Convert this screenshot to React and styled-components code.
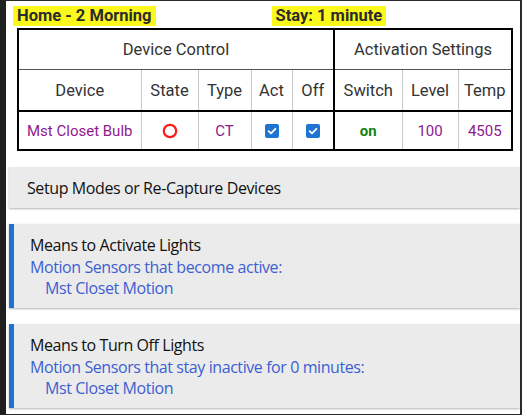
import React from 'react';
import styled, { createGlobalStyle } from 'styled-components';

const GlobalStyle = createGlobalStyle`
	html, body {
		margin: 0;
		padding: 0;
		background: #fff;
	}
	body {
		width: 522px;
		height: 417px;
		overflow: hidden;
	}
`;

const PURPLE = '#8e1a8e';
const BLUE_TEXT = '#3d5fd2';
const PANEL_BG = '#ebebeb';

const Frame = styled.div`
	box-sizing: border-box;
	width: 522px;
	height: 415px;
	border-left: 6px solid #1f1f1f;
	border-top: 1px solid #2a2a2a;
	border-right: 2px solid #2a2a2a;
	border-bottom: 1px solid #2a2a2a;
	padding-top: 4px;
	overflow: hidden;
`;

const TitleBar = styled.div`
	display: flex;
	padding-left: 7px;
	font-family: Roboto, "Liberation Sans", sans-serif;
	font-weight: bold;
	font-size: 16.5px;
	color: #2b2b2b;
	height: 21px;
	align-items: center;
`;

const Mark = styled.span`
	background: #fbf81c;
	padding: 0 4px;
	line-height: 20px;
	&:first-child {
		margin-right: 116px;
	}
`;

const Table = styled.table`
	margin: 2px 0 0 11px;
	width: 494px;
	border-collapse: collapse;
	border: 2px solid #000;
	font-family: Roboto, "Liberation Sans", sans-serif;
	font-size: 16.5px;
	color: #333;
	table-layout: fixed;
`;

const GroupCell = styled.th`
	font-weight: normal;
	height: 39px;
	border-bottom: 1px solid #555;
	border-right: ${p => (p.$split ? '2px solid #000' : 'none')};
	text-align: center;
	padding: 0;
`;

const HeadCell = styled.th`
	font-weight: normal;
	height: 40px;
	border-left: 1px solid #c8c8c8;
	border-right: ${p => (p.$split ? '2px solid #000' : '1px solid #c8c8c8')};
	border-bottom: 2px solid #000;
	text-align: center;
	padding: 0;
`;

const Cell = styled.td`
	height: 37px;
	text-align: center;
	padding: 0;
	border-left: 1px solid #c8c8c8;
	border-right: ${p => (p.$split ? '2px solid #000' : '1px solid #c8c8c8')};
	color: ${p => p.$color || PURPLE};
	font-weight: ${p => (p.$bold ? 'bold' : 'normal')};
	font-size: 15px;
	vertical-align: middle;
`;

const Icon = styled.svg`
	display: block;
	margin: 0 auto;
`;

const StateOff = () => (
	<Icon width="16" height="16" viewBox="0 0 16 16">
		<circle cx="8" cy="8" r="6.2" fill="none" stroke="#ff1a1a" strokeWidth="2.2" />
	</Icon>
);

const Checked = () => (
	<Icon width="14" height="14" viewBox="0 0 14 14">
		<rect x="0" y="0" width="14" height="14" rx="2" fill="#1e74d0" />
		<path d="M3.6 7.2 L6 9.4 L10.4 4.8" fill="none" stroke="#fff" strokeWidth="1.8" strokeLinecap="round" strokeLinejoin="round" />
	</Icon>
);

const SetupBar = styled.div`
	margin: 16px 0 0 3px;
	height: 41px;
	background: ${PANEL_BG};
	box-shadow: 0 1px 2px rgba(0, 0, 0, 0.3);
	display: flex;
	align-items: center;
	padding-left: 18px;
	font-family: "Open Sans", "Noto Sans", sans-serif;
	font-size: 16px;
	color: #111;
	letter-spacing: -0.4px;
`;

const Panel = styled.section`
	margin: 16px 0 0 3px;
	height: 84px;
	box-sizing: border-box;
	background: ${PANEL_BG};
	border-left: 5px solid #1e73cf;
	box-shadow: 0 1px 2px rgba(0, 0, 0, 0.3);
	padding: 11px 0 0 16px;
	font-family: "Open Sans", "Noto Sans", sans-serif;
	font-size: 16px;
	line-height: 21.5px;
	letter-spacing: -0.42px;
`;

const PanelTitle = styled.div`
	color: #111;
`;

const PanelLine = styled.div`
	color: ${BLUE_TEXT};
	padding-left: ${p => (p.$indent ? '15px' : '0')};
`;

const cols = [123, 57, 53, 41, 42, 68, 56, 54];

export default function App() {
	return (
		<>
			<GlobalStyle />
			<Frame>
				<TitleBar>
					<Mark>Home - 2 Morning</Mark>
					<Mark>Stay: 1 minute</Mark>
				</TitleBar>
				<Table>
					<colgroup>
						{cols.map((w, i) => (
							<col key={i} style={{ width: w }} />
						))}
					</colgroup>
					<thead>
						<tr>
							<GroupCell colSpan={5} $split>Device Control</GroupCell>
							<GroupCell colSpan={3}>Activation Settings</GroupCell>
						</tr>
						<tr>
							<HeadCell>Device</HeadCell>
							<HeadCell>State</HeadCell>
							<HeadCell>Type</HeadCell>
							<HeadCell>Act</HeadCell>
							<HeadCell $split>Off</HeadCell>
							<HeadCell>Switch</HeadCell>
							<HeadCell>Level</HeadCell>
							<HeadCell>Temp</HeadCell>
						</tr>
					</thead>
					<tbody>
						<tr>
							<Cell>Mst Closet Bulb</Cell>
							<Cell><StateOff /></Cell>
							<Cell>CT</Cell>
							<Cell><Checked /></Cell>
							<Cell $split><Checked /></Cell>
							<Cell $color="#128412" $bold>on</Cell>
							<Cell>100</Cell>
							<Cell>4505</Cell>
						</tr>
					</tbody>
				</Table>
				<SetupBar>Setup Modes or Re-Capture Devices</SetupBar>
				<Panel>
					<PanelTitle>Means to Activate Lights</PanelTitle>
					<PanelLine>Motion Sensors that become active:</PanelLine>
					<PanelLine $indent>Mst Closet Motion</PanelLine>
				</Panel>
				<Panel>
					<PanelTitle>Means to Turn Off Lights</PanelTitle>
					<PanelLine>Motion Sensors that stay inactive for 0 minutes:</PanelLine>
					<PanelLine $indent>Mst Closet Motion</PanelLine>
				</Panel>
			</Frame>
		</>
	);
}
